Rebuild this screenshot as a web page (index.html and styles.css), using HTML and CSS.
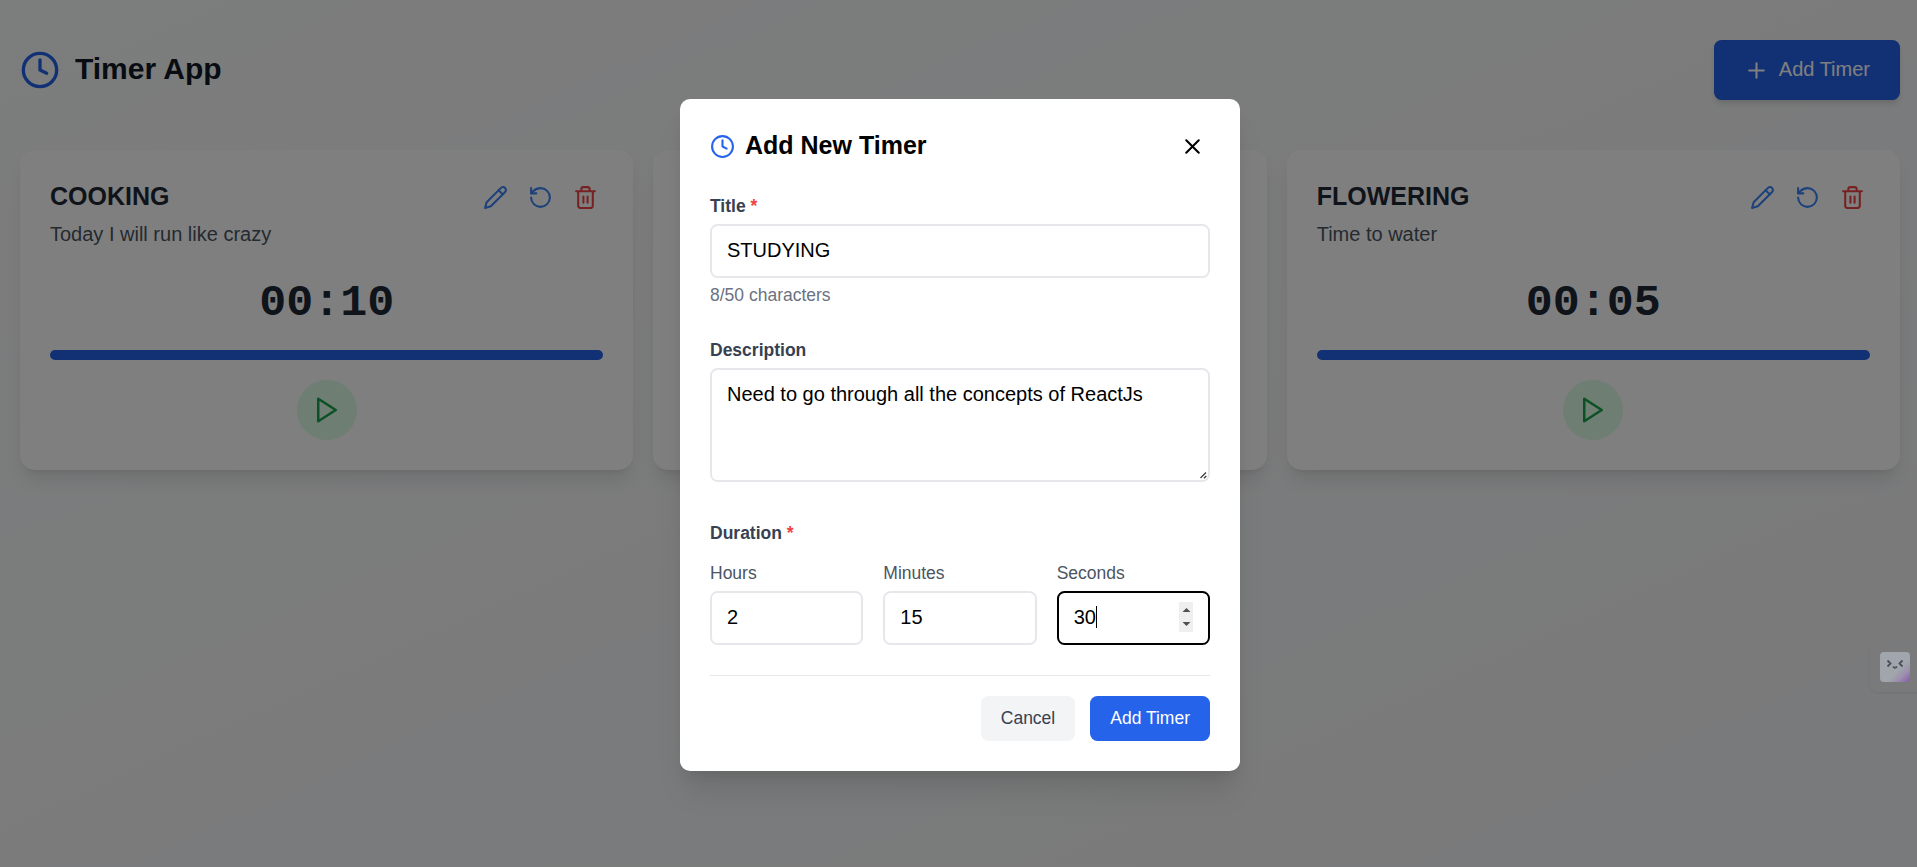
FILE: index.html
```html
<!DOCTYPE html>
<html lang="en">
<head>
<meta charset="utf-8">
<title>Timer App</title>
<link rel="stylesheet" href="styles.css">
</head>
<body>
<svg class="sprite" aria-hidden="true">
  <symbol id="clock" viewBox="0 0 24 24"><circle cx="12" cy="12" r="10"/><path d="M12 6v6l4 2"/></symbol>
  <symbol id="plus" viewBox="0 0 24 24"><path d="M5 12h14M12 5v14"/></symbol>
  <symbol id="close" viewBox="0 0 24 24"><path d="M18 6 6 18M6 6l12 12"/></symbol>
  <symbol id="pencil" viewBox="0 0 24 24"><path d="M17 3a2.85 2.83 0 1 1 4 4L7.5 20.5 2 22l1.5-5.5Z"/><path d="m15 5 4 4"/></symbol>
  <symbol id="rotate" viewBox="0 0 24 24"><path d="M3 12a9 9 0 1 0 9-9 9.75 9.75 0 0 0-6.74 2.74L3 8"/><path d="M3 3v5h5"/></symbol>
  <symbol id="trash" viewBox="0 0 24 24"><path d="M3 6h18M19 6v14c0 1-1 2-2 2H7c-1 0-2-1-2-2V6M8 6V4c0-1 1-2 2-2h4c1 0 2 1 2 2v2M10 11v6M14 11v6"/></symbol>
  <symbol id="play" viewBox="0 0 24 24"><path d="M5 3l14 9-14 9z"/></symbol>
</svg>
<div class="app">
  <header class="topbar">
    <div class="brand"><svg class="icon icon-lg"><use href="#clock"/></svg><h1>Timer App</h1></div>
    <button class="btn-add"><svg class="icon"><use href="#plus"/></svg><span>Add Timer</span></button>
  </header>
  <main class="grid">
    <section class="card">
      <div class="card-head"><h2>COOKING</h2><div class="actions"><svg class="icon blue"><use href="#pencil"/></svg><svg class="icon blue"><use href="#rotate"/></svg><svg class="icon red"><use href="#trash"/></svg></div></div>
      <p class="desc">Today I will run like crazy</p>
      <div class="time">00:10</div>
      <div class="bar"></div>
      <button class="play"><svg class="icon icon-md"><use href="#play"/></svg></button>
    </section>
    <section class="card"></section>
    <section class="card">
      <div class="card-head"><h2>FLOWERING</h2><div class="actions"><svg class="icon blue"><use href="#pencil"/></svg><svg class="icon blue"><use href="#rotate"/></svg><svg class="icon red"><use href="#trash"/></svg></div></div>
      <p class="desc">Time to water</p>
      <div class="time">00:05</div>
      <div class="bar"></div>
      <button class="play"><svg class="icon icon-md"><use href="#play"/></svg></button>
    </section>
  </main>
  <div class="overlay">
    <div class="modal">
      <div class="modal-head">
        <h3><svg class="icon accent"><use href="#clock"/></svg><span>Add New Timer</span></h3>
        <svg class="icon close"><use href="#close"/></svg>
      </div>
      <div class="field">
        <label>Title <b>*</b></label>
        <input class="control" value="STUDYING">
        <p class="hint">8/50 characters</p>
      </div>
      <div class="field">
        <label>Description</label>
        <div class="area-wrap">
          <textarea class="control area">Need to go through all the concepts of ReactJs</textarea>
          <svg class="grip" viewBox="0 0 7 7"><path d="M.5 6L6 .5M4 6.300L6.300 4"/></svg>
        </div>
      </div>
      <div class="field duration">
        <label>Duration <b>*</b></label>
        <div class="units">
          <div><span class="unit">Hours</span><input class="control" value="2"></div>
          <div><span class="unit">Minutes</span><input class="control" value="15"></div>
          <div><span class="unit">Seconds</span>
            <div class="control focused"><span class="value">30</span><span class="spinner"><svg viewBox="0 0 14 30"><path d="M3.500 10l4-4 4 4zM3.500 20l4 4 4-4z"/></svg></span></div>
          </div>
        </div>
      </div>
      <div class="modal-foot"><button class="cancel">Cancel</button><button class="submit">Add Timer</button></div>
    </div>
  </div>
  <div class="widget"><svg viewBox="0 0 30 30"><path d="M7.500 8.500l3 3-3 3M22.500 8.500l-3 3 3 3M13 14.500q2 2.500 4 0"/></svg></div>
</div>
</body>
</html>
```
FILE: styles.css
```css
* { box-sizing: border-box; margin: 0; padding: 0; }
html, body { height: 100%; overflow: hidden; }
body { font: 20px/30px "Liberation Sans", Arial, sans-serif; color: #000; }
button { font: inherit; border: 0; }
.sprite { display: none; }
.icon { display: block; flex: none; width: 25px; height: 25px; fill: none; stroke: currentColor; stroke-width: 2; stroke-linecap: round; stroke-linejoin: round; }
.icon-lg { width: 40px; height: 40px; }
.icon-md { width: 30px; height: 30px; }

.app { position: relative; width: 1920px; height: 870px; padding: 40px 20px; background: linear-gradient(to bottom right, #f9fafb, #f3f4f6); }
.topbar { display: flex; justify-content: space-between; align-items: center; height: 60px; margin-bottom: 50px; }
.brand { display: flex; align-items: center; gap: 15px; color: #2563eb; }
.brand h1 { padding-bottom: 2px; font-size: 30px; line-height: 38px; color: #111827; }
.btn-add { display: flex; align-items: center; gap: 10px; padding: 15px 30px; border-radius: 7.5px; background: #2563eb; color: #fff; box-shadow: 0 5px 7.5px -1px rgba(0,0,0,.1), 0 2.5px 5px -2.5px rgba(0,0,0,.1); }
.btn-add span { padding-bottom: 2px; line-height: 28px; }

.grid { display: grid; grid-template-columns: repeat(3, 1fr); gap: 20px; }
.card { height: 320px; padding: 30px; border-radius: 15px; background: #fff; color: #1f2937; box-shadow: 0 12.5px 19px -4px rgba(0,0,0,.1), 0 5px 7.5px -5px rgba(0,0,0,.1); }
.card-head { display: flex; justify-content: space-between; align-items: center; height: 35px; }
.card-head h2 { padding-bottom: 2px; font-size: 25px; line-height: 33px; }
.actions { display: flex; gap: 20px; padding: 5px; }
.blue { color: #3b82f6; }
.red { color: #ef4444; }
.desc { margin-top: 4px; color: #4b5563; }
.time { margin: 30px 0 21px; font: bold 45px/50px "Liberation Mono", monospace; text-align: center; }
.bar { height: 10px; border-radius: 5px; background: #2563eb; }
.play { display: block; margin: 20px auto 0; padding: 15px; border-radius: 50%; background: #dcfce7; color: #16a34a; }

.overlay { position: absolute; inset: 0; display: flex; align-items: center; justify-content: center; background: rgba(0,0,0,.5); }
.modal { width: 560px; padding: 30px; border-radius: 10px; background: #fff; box-shadow: 0 25px 31px -6px rgba(0,0,0,.1), 0 10px 12.5px -7.5px rgba(0,0,0,.1); }
.modal-head { display: flex; justify-content: space-between; align-items: center; height: 35px; margin-bottom: 30px; padding-right: 5px; }
.modal-head h3 { display: flex; align-items: center; gap: 10px; font-size: 25px; line-height: 33px; }
.modal-head span { padding-bottom: 2px; }
.accent { color: #2563eb; }
.field { margin-bottom: 30px; }
.field label { display: block; margin-bottom: 5px; font-size: 17.5px; line-height: 25px; font-weight: bold; color: #374151; }
.field label b { color: #ef4444; }
.control { display: block; width: 100%; height: 54px; padding: 9px 15px 11px; border: 2px solid #e5e7eb; border-radius: 7.5px; background: #fff; font: 20px/30px "Liberation Sans", Arial, sans-serif; color: #000; outline: none; }
.area-wrap { position: relative; margin-bottom: 39px; }
.area { height: 114px; resize: none; }
.grip { position: absolute; right: 3px; bottom: 3px; width: 7px; height: 7px; fill: none; stroke: #444; stroke-width: 1.4; }
.hint { margin-top: 5px; font-size: 17.5px; line-height: 25px; color: #6b7280; }
.duration label { margin-bottom: 15px; }
.units { display: grid; grid-template-columns: repeat(3, 1fr); gap: 20px; }
.unit { display: block; margin-bottom: 5px; font-size: 17.5px; line-height: 25px; color: #4b5563; }
.focused { display: flex; align-items: center; justify-content: space-between; border-color: #000; }
.value { height: 22px; line-height: 22px; border-right: 1px solid #000; }
.spinner { width: 14px; height: 30px; background: #efefef; }
.spinner svg { display: block; fill: #505050; }
.modal-foot { display: flex; justify-content: flex-end; gap: 15px; padding-top: 20px; border-top: 1px solid #e5e7eb; }
.modal-foot button { padding: 10px 20px; border-radius: 7.5px; font-size: 17.5px; line-height: 25px; }
.cancel { background: #f3f4f6; color: #374151; }
.submit { background: #2563eb; color: #fff; }

.widget { position: absolute; left: 1870px; top: 642px; width: 50px; height: 50px; padding: 10px; border-radius: 8px 0 0 8px; box-shadow: 0 1px 3px rgba(0,0,0,.06); }
.widget svg { display: block; border-radius: 4px; background: linear-gradient(135deg, #a1a6ac 60%, #9c8fae 78%, #8559a8); fill: none; stroke: #4a4f58; stroke-width: 1.8; }
```
